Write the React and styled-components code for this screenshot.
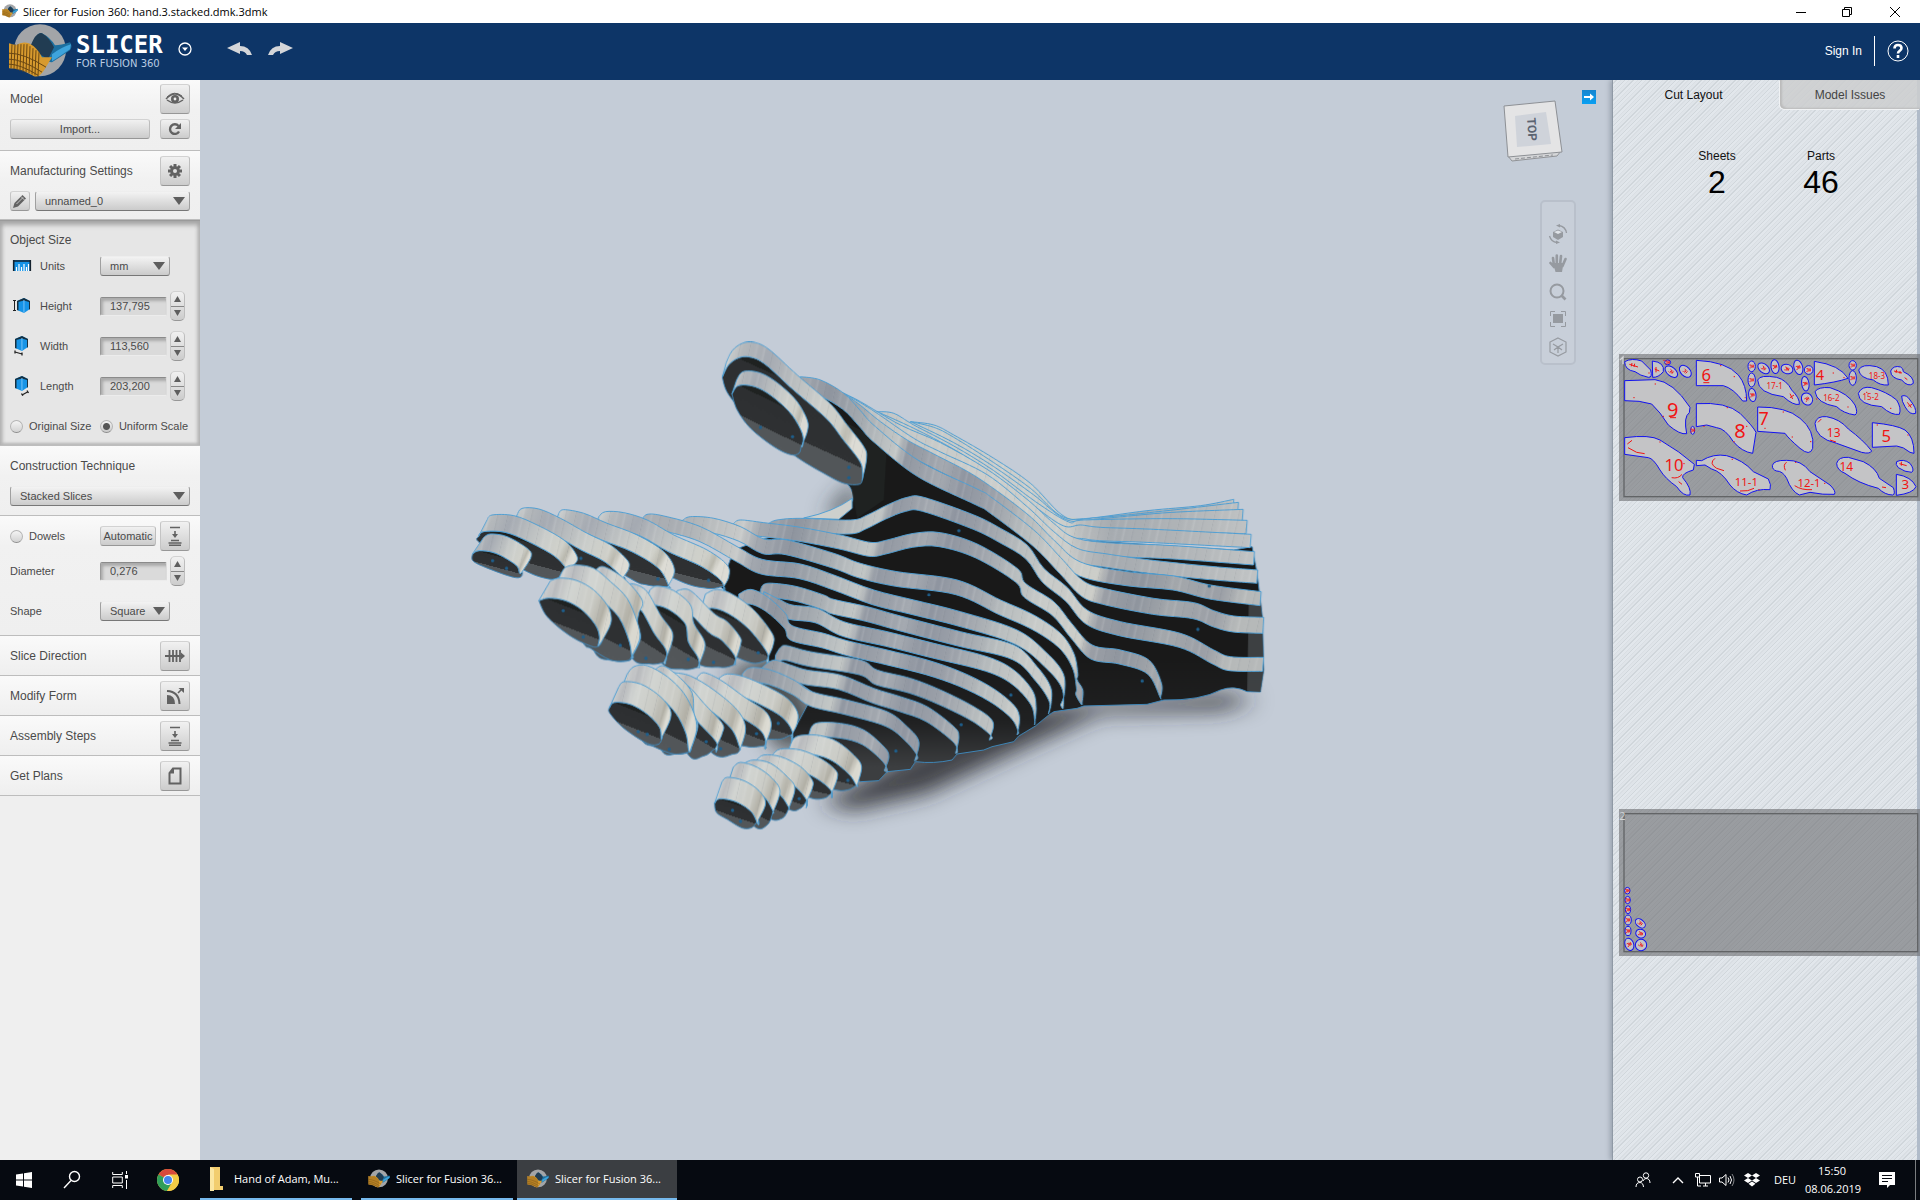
import React from "react";
import styled, { createGlobalStyle, css } from "styled-components";

const GlobalStyle = createGlobalStyle`
  * { box-sizing: border-box; }
  html, body, #root { height: 100%; }
  body { margin: 0; overflow: hidden; font-family: "Liberation Sans", Arial, sans-serif; font-size: 12px; color: #4a4a4a; }
  button, input, select { font: inherit; color: inherit; margin: 0; padding: 0; }
  svg { display: block; }
`;

/* ---------- window frame ---------- */

const Window = styled.div`
  display: flex;
  flex-direction: column;
  height: 100vh;
`;

const TitleBar = styled.div`
  display: flex;
  align-items: center;
  height: 23px;
  background: #fff;
  color: #000;
  font: 11px/16px "Open Sans", "Noto Sans", sans-serif;
  padding-left: 2px;
  gap: 5px;
`;

const WindowButtons = styled.div`
  display: flex;
  margin-left: auto;
`;

const WindowButton = styled.button`
  display: grid;
  place-items: center;
  width: 46px;
  height: 20px;
  border: 0;
  background: none;
  color: #000;
  &:last-child { width: 50px; }
`;

const Header = styled.header`
  display: flex;
  align-items: center;
  height: 57px;
  padding: 0 11px 0 8px;
  background: #0d3567;
  color: #fff;
`;

const Brand = styled.div`
  display: flex;
  align-items: center;
  gap: 4px;
`;

const BrandName = styled.div`
  font: bold 24px/24px "DejaVu Sans Mono", monospace;
`;

const BrandSub = styled.div`
  font: 10px/14px "DejaVu Sans", sans-serif;
  color: #b9cbe2;
`;

const IconButton = styled.button`
  display: grid;
  place-items: center;
  border: 0;
  background: none;
  color: inherit;
`;

const History = styled.div`
  display: flex;
  gap: 16px;
  margin-left: 35px;
  padding-bottom: 6px;
`;

const BrandMenu = styled(IconButton)`
  margin: 0 0 6px 15px;
`;

const Account = styled.div`
  display: flex;
  align-items: center;
  gap: 12px;
  margin-left: auto;
  padding-bottom: 2px;
`;

const SignIn = styled.a`
  color: #fff;
  text-decoration: none;
`;

const Divider = styled.span`
  width: 1px;
  height: 30px;
  background: #fff;
`;

const Main = styled.div`
  display: flex;
  flex: 1;
  min-height: 0;
`;

/* ---------- settings side bar ---------- */

const Sidebar = styled.aside`
  width: 200px;
  flex: none;
  background: #efefef;
`;

const raised = css`
  border: 1px solid;
  border-color: #d2d2d2 #bdbdbd #979797 #c4c4c4;
  border-radius: 3px;
  background: linear-gradient(#f1f1f1, #cccccc);
`;

const Section = styled.section`
  display: flex;
  flex-direction: column;
  gap: ${(p) => p.$gap || 5}px;
  padding: ${(p) => p.$pad || "5px 10px 8px"};
  background: linear-gradient(#fafafa, #f1f1f1 30px, #efefef);
  border-bottom: 1px solid #bdbdbd;
`;

const Sunken = styled(Section)`
  padding: 11px 10px;
  background: #e6e6e6;
  border-top: 1px solid #9a9a9a;
  box-shadow: inset 0 4px 5px #a5a5a5, inset 0 -2px 3px #bbb, inset 3px 0 3px #c6c6c6, inset -3px 0 3px #c6c6c6;
  gap: 8px;
`;

const Row = styled.div`
  display: flex;
  align-items: center;
  height: ${(p) => p.$h || 30}px;
  gap: ${(p) => p.$gap || 10}px;
`;

const Heading = styled.h2`
  margin: 0;
  font-size: 12px;
  font-weight: normal;
  line-height: 16px;
  flex: 1;
  white-space: nowrap;
`;

const Tool = styled.button`
  ${raised}
  display: grid;
  place-items: center;
  flex: none;
  width: ${(p) => p.$w || 30}px;
  height: ${(p) => p.$h || 30}px;
  color: #626262;
`;

const TextButton = styled.button`
  ${raised}
  flex: ${(p) => (p.$grow ? 1 : "none")};
  width: ${(p) => (p.$grow ? "auto" : "56px")};
  height: 20px;
  font-size: 11px;
  line-height: 16px;
`;

const SelectWrap = styled.span`
  display: flex;
  position: relative;
  width: ${(p) => p.$w || "100%"};
  flex: ${(p) => (p.$w ? "none" : 1)};
  &::after {
    content: "";
    position: absolute;
    right: 5px;
    top: 6px;
    border: 6px solid transparent;
    border-top: 8px solid #5e5e5e;
    border-bottom: 0;
    pointer-events: none;
  }
`;

const Select = styled.select`
  appearance: none;
  width: 100%;
  height: 20px;
  padding-left: 9px;
  font-size: 11px;
  border: 1px solid;
  border-color: #eee #a0a0a0 #777 #a0a0a0;
  border-radius: 3px;
  background: linear-gradient(#f3f3f3, #cbcbcb);
`;

const FieldRow = styled.div`
  display: grid;
  grid-template-columns: ${(p) => (p.$plain ? "90px 67px 15px" : "30px 60px 67px 15px")};
  align-items: center;
  height: ${(p) => p.$h || 30}px;
  font-size: 11px;
`;

const Measures = styled.div`
  display: flex;
  flex-direction: column;
  gap: 10px;
  margin-top: 7px;
`;

const NumberInput = styled.input`
  width: 67px;
  height: 19px;
  padding-left: 9px;
  font-size: 11px;
  border: 1px solid;
  border-color: #8b8b8b #dcdcdc #ececec #9a9a9a;
  border-radius: 2px;
  background: #dadada;
  box-shadow: inset 2px 3px 3px #aaa;
`;

const Stepper = styled.div`
  ${raised}
  width: 15px;
  height: 30px;
  margin-left: 3px;
  border-radius: 5px;
  display: flex;
  flex-direction: column;
`;

const StepButton = styled.button`
  display: grid;
  place-items: center;
  flex: 1;
  border: 0;
  background: none;
  color: #5e5e5e;
  & + & { border-top: 1px solid #888; }
`;

const Radios = styled.div`
  display: flex;
  justify-content: space-between;
  height: 16px;
  margin-top: 9px;
  padding-right: 2px;
`;

const RadioLabel = styled.label`
  display: flex;
  align-items: center;
  gap: 6px;
  font-size: 11px;
  flex: ${(p) => (p.$grow ? 1 : "none")};
`;

const Radio = styled.input`
  appearance: none;
  width: 13px;
  height: 13px;
  border: 1px solid #b4b4b4;
  border-bottom-color: #8d8d8d;
  border-radius: 50%;
  background: linear-gradient(#f4f4f4, #d2d2d2);
  &:checked {
    background: radial-gradient(circle, #555 0 3px, transparent 4px), linear-gradient(#f4f4f4, #c8c8c8);
  }
`;

/* ---------- viewport ---------- */

const Viewport = styled.main`
  position: relative;
  flex: 1;
  min-width: 0;
  background: #c4ccd7;
`;

const Scene = styled.svg`
  width: 100%;
  height: 100%;
`;

const Collapse = styled.button`
  position: absolute;
  top: 10px;
  right: 17px;
  width: 14px;
  height: 14px;
  padding: 0;
  border: 0;
  background: linear-gradient(#1585cf, #0aa0f2);
`;

const ViewCube = styled.button`
  position: absolute;
  top: 20px;
  right: 50px;
  border: 0;
  background: none;
`;

const NavBar = styled.nav`
  position: absolute;
  top: 120px;
  right: 37px;
  width: 36px;
  height: 165px;
  padding: 22px 0 6px;
  display: flex;
  flex-direction: column;
  align-items: center;
  justify-content: space-between;
  border: 2px solid #b9c0cb;
  border-radius: 5px;
  background: #c8cfd9;
  color: #969aa0;
`;

/* ---------- cut layout panel ---------- */

const stripes = css`
  background: repeating-linear-gradient(135deg, #dfe4e9 0 2px, #d0d6db 2px 3px, #e2e7ec 3px 5px, #d9dee3 5px 6px);
`;

const Panel = styled.aside`
  ${stripes}
  position: relative;
  flex: none;
  width: 307px;
  box-shadow: inset -3px 0 0 #b0bbc9, -1px 0 0 #8f99a5, -3px 0 5px #98a1ad;
  clip-path: inset(0 0 0 -10px);
`;

const Tabs = styled.div`
  display: flex;
  height: 29px;
`;

const Tab = styled.button`
  border: 0;
  background: none;
  color: ${(p) => (p.$active ? "#111" : "#444")};
  flex: ${(p) => (p.$active ? 1 : "none")};
  width: 140px;
  padding-right: ${(p) => (p.$active ? "6px" : 0)};
  ${(p) =>
    !p.$active &&
    css`
      background: rgba(205, 206, 207, 0.85);
      border-radius: 0 0 0 5px;
      box-shadow: inset 2px -1px 2px #bbb, -1px 1px 0 #f0f2f4;
    `}
`;

const Stats = styled.dl`
  display: flex;
  margin: 39px 0 0 52px;
  color: #111;
`;

const Stat = styled.div`
  width: 104px;
  text-align: center;
  dt { line-height: 16px; }
  dd { margin: 0; font-size: 32px; line-height: 36px; color: #000; }
`;

const Sheets = styled.div`
  display: flex;
  flex-direction: column;
  gap: 308px;
  padding: 154px 0 0 6px;
`;

/* ---------- task bar ---------- */

const Taskbar = styled.footer`
  display: flex;
  align-items: stretch;
  height: 40px;
  background: #060a11;
  color: #fff;
  font: 11px/16px "Open Sans", "Noto Sans", sans-serif;
`;

const TaskIcon = styled.button`
  display: grid;
  place-items: center;
  width: 48px;
  border: 0;
  background: none;
  color: #fff;
`;

const Launchers = styled.div`
  display: flex;
  width: 200px;
`;

const Task = styled.button`
  display: flex;
  align-items: center;
  gap: 6px;
  width: ${(p) => (p.$active ? 160 : 152)}px;
  margin-right: ${(p) => p.$mr || 0}px;
  padding-left: ${(p) => (p.$active ? 10 : 7)}px;
  border: 0;
  border-bottom: 2px solid #76b9ed;
  background: ${(p) => (p.$active ? "#3b3e42" : "none")};
  color: #fff;
  white-space: nowrap;
`;

const Tray = styled.div`
  display: flex;
  align-items: center;
  margin-left: auto;
`;

const TrayButton = styled.button`
  display: grid;
  place-items: center;
  width: ${(p) => p.$w || 24}px;
  border: 0;
  background: none;
  color: #fff;
`;

const Clock = styled.div`
  width: 54px;
  text-align: center;
  line-height: 18px;
  white-space: nowrap;
`;

const ShowDesktop = styled.div`
  width: 5px;
  height: 40px;
  border-left: 1px solid #7a7d80;
`;

/* ---------- drawings ---------- */

// Catmull-Rom spline through the points; continues the current path when join is set.
function spline(pts, join) {
  let d = (join ? "L" : "M") + pts[0][0] + " " + pts[0][1];
  for (let i = 0; i < pts.length - 1; i++) {
    const a = pts[i - 1] || pts[i];
    const b = pts[i];
    const c = pts[i + 1];
    const e = pts[i + 2] || c;
    const f = (n) => n.toFixed(1);
    d += ` C${f(b[0] + (c[0] - a[0]) / 6)} ${f(b[1] + (c[1] - a[1]) / 6)} ${f(c[0] - (e[0] - b[0]) / 6)} ${f(c[1] - (e[1] - b[1]) / 6)} ${c[0]} ${c[1]}`;
  }
  return d;
}

const toPoints = (s) => s.split(" ").map((p) => p.split(",").map(Number));

// One layer of the stack: its rim (top edge swept by v) and the dark face below it.
// A tapered rim runs out in a point at its right end.
function Slice({ top, v = [-4, 44], under, taper, fill = "url(#palm)", face = "url(#face)" }) {
  const edge = toPoints(top);
  const low = edge.map(([x, y]) => [x + v[0], y + v[1]]);
  const end = edge[edge.length - 1];
  const lowEdge = under || taper ? low.slice(0, -1).filter(([, y]) => y < end[1] + 10 || !taper).concat([end]) : low;
  const rim = spline(edge) + spline([...lowEdge].reverse(), true) + "Z";
  return (
    <g strokeLinejoin="round">
      {under && <path d={spline([...lowEdge, ...toPoints(under), lowEdge[0]]) + "Z"} fill={face} stroke="#3f87b8" strokeWidth="3" />}
      <path d={rim} fill={fill} stroke="#4f9fd3" strokeWidth="3" />
      <path d={rim} fill="url(#streak)" />
    </g>
  );
}

const wristSheets = [
  "630,-55 700,-45 760,-15 880,55 990,130 1085,225 1150,236 1340,212 1500,197 1600,178",
  "630,-55 700,-38 760,-8 880,68 990,145 1090,232 1200,232 1400,212 1614,187",
  "630,-55 760,8 880,80 1000,165 1100,240 1200,236 1400,218 1628,208",
  "530,-85 580,-80 640,-45 760,18 880,92 1005,185 1105,246 1150,240 1400,236 1640,241",
  "530,-85 640,-35 760,28 880,105 1010,205 1090,258 1140,255 1200,262 1360,268 1652,283",
  "430,-140 480,-115 600,-45 720,8 860,88 980,178 1060,250 1120,292 1220,308 1420,317 1662,335",
  "430,-140 480,-112 530,-80 640,-5 720,36 860,104 980,200 1060,275 1130,325 1220,342 1350,360 1520,378 1672,390",
];

const palmSlices = [
  { top: "205,250 230,240 300,235 450,240 500,225 560,195 620,172 670,172 820,225 900,265 980,315 1030,385 1100,442 1160,510 1260,545 1440,580 1540,630 1590,650 1690,652", v: [-4, 42] },
  { top: "100,250 120,240 190,248 300,262 420,285 510,307 560,300 640,280 720,278 830,312 950,385 975,430 1060,485 1115,552 1175,615 1260,630 1345,660 1383,730 1380,774", v: [-4, 42], taper: true },
  { top: "-55,242 -30,230 40,235 120,260 190,297 260,300 400,340 480,370 590,395 770,420 900,480 1000,525 1080,580 1120,640 1132,700 1130,720 1147,750 1145,788", taper: true },
  { top: "-175,240 -160,223 -110,228 0,260 110,320 185,358 300,372 400,405 520,450 640,480 780,515 950,570 1040,640 1088,700 1092,760 1080,795", taper: true },
];

const lowerPalm = [
  { top: "180,450 190,433 220,430 290,440 370,465 400,478 500,500 600,528 780,575 940,615 1010,680 1050,740 1052,790 1044,822", taper: true },
  { top: "190,455 240,480 275,495 350,505 430,545 560,575 700,610 860,650 940,690 995,750 1007,800 1002,855", taper: true },
  { top: "115,462 150,448 200,470 255,520 275,557 370,580 440,602 560,630 680,660 780,695 870,740 935,790 957,830 950,885", taper: true },
  { top: "225,645 240,622 260,617 330,635 480,660 530,690 630,715 720,750 820,800 877,845 866,900", taper: true },
  { top: "185,682 220,660 270,675 320,690 420,705 520,745 600,770 680,800 760,860 775,890 765,940", taper: true },
  { top: "125,702 150,683 210,690 280,720 335,755 440,780 560,815 620,860 655,905 642,963", taper: true },
  { top: "325,882 345,850 420,850 490,870 550,920 565,950 551,992", taper: true },
];

const indexSlices = [
  { top: "415,560 435,545 490,548 560,570 640,615 740,660 800,705 805,740 790,770", v: [-16, 50], under: "740,775 640,745" },
  { top: "295,550 310,539 370,550 440,580 530,615 610,665 642,720 622,770", v: [-16, 50], under: "560,765 500,740" },
  { top: "170,555 185,535 235,537 300,565 380,610 450,645 500,690 505,715 490,740", v: [-18, 50], under: "430,735 300,690" },
  { top: "80,570 95,555 160,557 230,585 310,630 348,675 345,700 310,725", v: [-26, 50], under: "290,745 255,745 190,720 60,640" },
  { top: "70,622 90,612 140,620 200,655 212,680 185,725", v: [-34, 50], under: "182,740 160,742 100,722 40,695" },
];

const middleSlices = [
  { top: "735,72 770,58 820,75 880,120 935,190 938,225 918,272", v: [-16, 56], under: "870,278 780,230" },
  { top: "650,62 690,62 760,130 800,155 838,200 840,225 820,285", v: [-16, 56], under: "780,292 700,270" },
  { top: "568,60 590,48 640,62 690,105 700,160 728,205 733,235 712,292", v: [-16, 56], under: "670,298 600,275" },
  { top: "490,45 520,42 560,65 600,135 635,185 632,225 610,278", v: [-18, 56], under: "570,282 512,260" },
  { top: "405,0 430,-10 490,25 545,90 535,130 530,165 540,205 514,262", v: [-22, 56], under: "505,272 460,272 400,240" },
  { top: "300,15 315,-8 350,-15 400,-5 450,35 500,85 530,155 538,205 512,262", v: [-24, 58], under: "500,272 450,270 390,235 365,215" },
  { top: "270,32 300,24 350,32 400,60 440,105 452,140 448,168 425,212", v: [-35, 60], under: "415,228 390,228 325,195 260,140" },
];

const ringSlices = [
  { top: "775,325 800,312 850,320 920,350 980,385 1010,425 1010,460 993,495", v: [-16, 56], under: "950,508 860,490" },
  { top: "710,322 730,308 780,330 850,380 910,420 930,450 930,480 912,528", v: [-16, 56], under: "860,530 780,500" },
  { top: "640,308 690,318 760,360 830,420 855,475 838,540", v: [-18, 56], under: "820,552 750,545" },
  { top: "620,310 680,345 730,400 785,460 785,490 765,535", v: [-18, 56], under: "730,558 680,550" },
  { top: "585,298 610,288 660,325 695,370 700,430 712,470 688,545", v: [-22, 58], under: "650,552 600,535" },
  { top: "500,312 520,290 560,287 620,320 670,370 700,430 708,480 688,545", v: [-24, 60], under: "640,552 580,530 540,505" },
  { top: "474,352 490,335 540,342 590,372 625,410 630,445 605,500", v: [-28, 62], under: "595,522 560,520 490,475 448,430" },
];

const pinkySlices = [
  { top: "985,538 1000,505 1030,495 1080,497 1130,515 1180,555 1203,590 1190,645", v: [-14, 58], under: "1160,660 1110,655" },
  { top: "935,555 960,537 1020,540 1080,565 1125,600 1130,625 1113,670", v: [-16, 58], under: "1090,685 1040,680" },
  { top: "888,570 910,555 960,560 1020,590 1055,630 1055,655 1040,690", v: [-18, 58], under: "1020,715 980,715" },
  { top: "850,580 880,570 930,580 980,620 1003,655 985,715", v: [-18, 58], under: "965,745 920,740" },
  { top: "818,592 840,577 890,592 935,625 958,665 936,730", v: [-20, 60], under: "920,765 880,768" },
  { top: "784,636 800,622 850,632 895,662 915,700 893,750", v: [-22, 64], under: "875,772 845,774 800,748 768,728" },
];

const thumbSlices = [
  { top: "797,98 815,62 845,40 880,37 925,58 1010,135 1110,222 1160,285 1210,350 1218,385 1205,450", v: [-12, 44], under: "1195,463 1150,460 1090,430 1000,375 880,280 805,195" },
  { top: "828,150 845,126 880,124 920,138 965,170 1010,215 1040,270 1040,305 1022,350", v: [-14, 42], under: "1015,370 990,374 940,350 870,295 830,240" },
];

const pinHoles = "900,292 996,320 1165,412 1165,443 96,692 138,715 361,685 592,747 744,751 308,842 368,921 479,946 556,985 683,988 759,997 893,968 533,1205 560,1213 626,1258 737,1235 780,1256 888,1211 953,1180 816,1441 840,1474 1016,1406 1162,1351 1495,602 1405,795 1651,1095 1502,1184 1306,1263 2212,898 2045,1053 2246,768";

function HandModel() {
  return (
    <Scene viewBox="200 80 1412 1080" role="img" aria-label="Sliced hand model">
      <defs>
        <linearGradient id="palm" gradientUnits="userSpaceOnUse" x1="0" y1="0" x2="1640" y2="420">
          {[
            [0, "#aaaeb3"], [4, "#b5b9bb"], [11, "#c9cbca"], [14, "#a4a9b0"], [20, "#8f959f"], [26, "#a2a8ae"],
            [32, "#bcc1c2"], [34, "#c3c7c6"], [36, "#9298a2"], [43, "#a4a9b0"], [47, "#8f95a0"], [53, "#9da2aa"],
            [60, "#b9bebf"], [66, "#c8cbc9"], [74, "#cdcec9"], [76, "#9b9fa6"], [82, "#8f959e"], [88, "#a3a7ab"], [96, "#9b9fa6"], [100, "#b6b9b9"],
          ].map(([o, c]) => <stop key={o} offset={o + "%"} stopColor={c} />)}
        </linearGradient>
        <linearGradient id="back" gradientUnits="userSpaceOnUse" x1="300" y1="0" x2="1640" y2="0">
          {[[0, "#a6abb2"], [10, "#b9bdbf"], [22, "#c6c9c8"], [45, "#cdcfcc"], [60, "#cccecb"], [63, "#b9bcbd"], [70, "#a6abb0"], [85, "#b0b4b7"], [100, "#bfc2c3"]].map(([o, c]) => (
            <stop key={o} offset={o + "%"} stopColor={c} />
          ))}
        </linearGradient>
        <linearGradient id="finger" x1="0" y1="0.1" x2="1" y2="0.4">
          <stop offset="0" stopColor="#d6d8d6" />
          <stop offset="0.12" stopColor="#b4b8bb" />
          <stop offset="0.3" stopColor="#a5aab2" />
          <stop offset="0.5" stopColor="#b9bdbf" />
          <stop offset="0.7" stopColor="#cbcecb" />
          <stop offset="0.88" stopColor="#d0d1ca" />
          <stop offset="0.95" stopColor="#b9b8ae" />
          <stop offset="1" stopColor="#dddcd5" />
        </linearGradient>
        <linearGradient id="tip" x1="0" y1="0.1" x2="1" y2="0.4">
          <stop offset="0" stopColor="#dfe1df" />
          <stop offset="0.22" stopColor="#b9bbbe" />
          <stop offset="0.42" stopColor="#d2d5d2" />
          <stop offset="0.75" stopColor="#cacbc5" />
          <stop offset="0.92" stopColor="#b2b0a6" />
          <stop offset="1" stopColor="#dad9d0" />
        </linearGradient>
        <linearGradient id="streak" gradientUnits="userSpaceOnUse" x1="0" y1="0" x2="97" y2="22" spreadMethod="repeat">
          {[[0, 0], [8, 0.12], [12, 0], [30, 0.02], [33, 0.1], [37, 0], [60, 0], [63, 0.15], [65, 0], [84, 0.08], [90, 0], [100, 0]].map(([o, a]) => (
            <stop key={o} offset={o + "%"} stopColor={o % 2 ? "#5d6470" : "#fff"} stopOpacity={a} />
          ))}
        </linearGradient>
        <linearGradient id="face" x1="0.85" y1="0.1" x2="0.4" y2="1">
          <stop offset="0" stopColor="#1f2221" />
          <stop offset="0.25" stopColor="#1f2221" />
          <stop offset="0.25" stopColor="#2d2f31" />
          <stop offset="0.62" stopColor="#2f3133" />
          <stop offset="0.62" stopColor="#525659" />
          <stop offset="1" stopColor="#54585b" />
        </linearGradient>
        <linearGradient id="body" gradientUnits="userSpaceOnUse" x1="0" y1="650" x2="0" y2="980">
          <stop offset="0" stopColor="#191919" />
          <stop offset="0.6" stopColor="#202122" />
          <stop offset="1" stopColor="#3c3e40" />
        </linearGradient>
        <filter id="soft" x="-50%" y="-50%" width="200%" height="200%"><feGaussianBlur stdDeviation="32" /></filter>
      </defs>
      <g transform="translate(460 330) scale(0.33333)">
        <g filter="url(#soft)">
          <path d="M1080 1420 L1560 1160 L1900 1120 L2300 1090 L2390 1110 L2280 1140 L1920 1150 L1700 1250 L1400 1390 L1180 1440Z" fill="#2a2c30" opacity="0.85" />
          <path d="M1090 560 L1190 440 L1180 560Z" fill="#3a3d42" opacity="0.8" />
          <path d="M800 1020 L980 960 L1100 1230 L960 1270Z" fill="#2f3236" opacity="0.8" />
        </g>
        <g transform="translate(720 330)">
          <path
            d="M440 130 Q470 165 452 190 L415 232 L180 300 L100 330 L60 440 L150 520 L215 600 L200 660 L340 760 L270 890 L480 1025 L535 1022 L560 995 L630 988 L645 965 Q700 972 755 960 L770 942 L850 930 L875 920 L940 905 L955 888 L1005 858 L1045 825 L1060 815 L1130 805 L1150 798 L1340 793 L1390 780 Q1500 782 1560 750 Q1600 735 1640 755 L1680 756 L1690 690 L1686 532 L1670 400 L1655 320 L1600 330 L1130 300 L600 -20 L480 -90 L300 -150Z"
            fill="url(#body)" stroke="#3f87b8" strokeWidth="3"
          />
          <path d="M300 -120 L560 10 L550 180 L470 235 L450 130 L490 60Z" fill="#1f2221" />
          <path d="M1645 480 L1682 480 L1690 690 L1680 756 L1640 752Z" fill="#4a4d50" opacity="0.75" />
          <path d="M310 234 Q400 215 455 175 L455 205 L415 238Z" fill="#cdd0cd" stroke="#4f9fd3" strokeWidth="3" />
          <path
            d="M300 -190 L360 -180 L430 -140 L530 -85 L630 -55 L760 -10 L880 60 L990 135 L1085 228 L1150 236 L1150 395 L1130 390 L1000 258 L830 125 L655 40 L480 -60Z"
            fill="#cbcecb"
          />
          {wristSheets.map((top) => <Slice key={top} top={top} v={[-3, 40]} fill="url(#back)" />)}
          <Slice top="430,-140 480,-104 540,-55 620,0 700,42 830,112 980,222 1060,300 1140,366 1280,395 1420,408 1530,435 1682,455" v={[-3, 42]} />
          <Slice top="300,-190 360,-180 430,-140 480,-88 525,-40 655,62 830,147 870,170 1000,270 1080,352 1145,420 1210,445 1360,475 1480,488 1540,512 1600,528 1690,532" v={[-3, 48]} />
          {palmSlices.map((s) => <Slice key={s.top} {...s} />)}
        </g>
        {indexSlices.map((s) => <Slice key={s.top} {...s} fill="url(#finger)" />)}
        <g transform="translate(720 330)">
          {lowerPalm.slice(0, 3).map((s) => <Slice key={s.top} {...s} />)}
        </g>
        <g transform="translate(0 720)">
          {middleSlices.map((s) => <Slice key={s.top} {...s} fill="url(#tip)" />)}
        </g>
        <g transform="translate(720 330)">
          {lowerPalm.slice(3, 6).map((s) => <Slice key={s.top} {...s} />)}
        </g>
        <g transform="translate(0 720)">
          {ringSlices.map((s) => <Slice key={s.top} {...s} fill="url(#tip)" />)}
        </g>
        <g transform="translate(720 330)">
          <Slice {...lowerPalm[6]} />
        </g>
        <g transform="translate(0 720)">
          {pinkySlices.map((s) => <Slice key={s.top} {...s} fill="url(#tip)" />)}
        </g>
        {thumbSlices.map((s) => <Slice key={s.top} {...s} fill="url(#finger)" />)}
        {toPoints(pinHoles).map(([x, y]) => <circle key={x + "-" + y} cx={x} cy={y} r="5" fill="#1f5f8c" />)}
      </g>
    </Scene>
  );
}

function LogoMark({ size = 18 }) {
  const ribs = [0, 1, 2, 3, 4, 5, 6, 7, 8, 9];
  return (
    <svg width={size} height={size * 0.88} viewBox="0 0 64 56" aria-hidden="true">
      <circle cx="32" cy="27" r="26" fill="#a3a5a8" />
      <path d="M20 30 Q28 8 34 10 Q42 14 47 22 Q53 22 62 19 Q65 23 62 27 Q52 34 44 39 L34 38Z" fill="#1d6f9f" />
      <path d="M22 24 Q28 8 34 10 Q41 14 46 24 L40 36 L30 30Z" fill="#213c52" />
      <path d="M44 31 Q53 24 63 21 L62 26 Q52 33 44 38Z" fill="#3ea4dc" />
      <path d="M1 20 L8 22 Q14 18 21 20 Q29 24 34 34 L44 34 L36 47 Q31 55 26 53 Q14 45 1 45Z" fill="#d79a2e" />
      <g stroke="#6a4712" strokeWidth="1" fill="none">
        {ribs.map((i) => <path key={i} d={`M${4 + i * 3} ${21 + (i > 5 ? (i - 5) * 2 : 0)} L${3 + i * 3} ${45 + i * 0.9}`} />)}
        <path d="M1 30 Q16 30 38 44 M1 36 Q14 36 34 49 M1 41 Q12 41 30 52" />
      </g>
    </svg>
  );
}

const Svg = ({ w = 18, h, box, children }) => (
  <svg width={w} height={h || w} viewBox={box || `0 0 ${w} ${h || w}`} fill="none" stroke="currentColor" aria-hidden="true">
    {children}
  </svg>
);

const EyeIcon = () => (
  <Svg w={20} h={14}>
    <path d="M1 7 Q10 -3 19 7 M2 8 Q10 14 18 8" strokeWidth="1.4" />
    <path d="M2 5 Q9 -2 17 4" strokeWidth="1" />
    <circle cx="10" cy="7" r="4" fill="currentColor" stroke="none" />
    <circle cx="10" cy="7" r="1.4" fill="#eee" stroke="none" />
  </Svg>
);
const ReloadIcon = () => (
  <Svg w={14} h={14}>
    <path d="M11 9.5 A4.8 4.8 0 1 1 10.5 4" strokeWidth="2.4" />
    <path d="M13 1 V7 H7Z" fill="currentColor" stroke="none" />
  </Svg>
);
const GearIcon = () => (
  <Svg w={16}>
    {[0, 45, 90, 135].map((a) => <path key={a} d="M8 1 V15" strokeWidth="3" transform={`rotate(${a} 8 8)`} />)}
    <circle cx="8" cy="8" r="4.8" fill="currentColor" stroke="none" />
    <circle cx="8" cy="8" r="2" fill="#e0e0e0" stroke="none" />
  </Svg>
);
const PencilIcon = () => (
  <Svg w={14}>
    <path d="M0 14 L1.5 9 L9.5 1 L13 4.5 L5 12.5Z" fill="currentColor" stroke="none" />
    <path d="M3.5 10 L10 3.5 M8 2.5 L11.5 6" stroke="#ddd" strokeWidth="0.8" />
  </Svg>
);
const StackIcon = () => (
  <Svg w={16} h={20}>
    <path d="M3 1.5 H13 M4 14.5 H12 M1.5 17 H14.5 M2 19.2 H14" strokeWidth="1.6" />
    <path d="M8 5 V9" strokeWidth="1.6" />
    <path d="M5 8 H11 L8 12Z" fill="currentColor" stroke="none" />
  </Svg>
);
const DirectionIcon = () => (
  <Svg w={20} h={12}>
    <path d="M0 6 H16 M4.5 0 V12 M8 0 V12 M11.5 0 V12 M15 0 V12" strokeWidth="1.8" />
    <path d="M16 2.5 L20 6 L16 9.5Z" fill="currentColor" stroke="none" />
  </Svg>
);
const FormIcon = () => (
  <Svg w={18} h={18}>
    <path d="M1 8 Q9 8 9 17 H1Z" fill="currentColor" stroke="none" />
    <path d="M1 4 Q13 4.5 13.5 17" strokeWidth="2" />
    <path d="M12 6 L15 3" strokeWidth="1.6" />
    <path d="M12.5 1 H18 V6Z" fill="currentColor" stroke="none" />
  </Svg>
);
const PlansIcon = () => (
  <Svg w={14} h={18}>
    <path d="M5 1.5 H12.5 V16.5 H1.5 V6Z" strokeWidth="2" />
    <path d="M1 6.5 H6 V1Z" fill="currentColor" stroke="none" />
  </Svg>
);

const RulerIcon = () => (
  <Svg w={24} h={12}>
    <g transform="translate(3 0)">
      <rect width="18" height="11" fill="#1593e6" stroke="none" />
      <path d="M0 1 H18 M.7 0 V11 M17.3 0 V11" stroke="#14222e" strokeWidth="1.6" />
      <path d="M3.5 7 V11 M6 4 V11 M8.5 7 V11 M11 4 V11 M13.5 7 V11 M15.5 4 V11" stroke="#fff" strokeWidth="1.2" />
    </g>
  </Svg>
);
const AxisIcon = ({ axis }) => (
  <Svg w={22} h={20}>
    <g transform={axis === "height" ? "translate(4 1)" : "translate(2 -1)"} stroke="none">
      <path d="M3 4 L10 1 L16 4 V12 L10 16 L3 13Z" fill="#1593e6" />
      <path d="M3 4 L10 1 L16 4 L15 5 L10 3.5 L4 5Z M3 4 H4.5 V13.5 L3 13Z M15 4 H16 V12 L15 12.7Z" fill="#17303f" />
      <path d="M9.6 3 V15.5 H10.3 V3Z" fill="#9ed6ff" />
    </g>
    {axis === "height" && <path d="M3 4.5 H6 M3 14.5 H6 M4.5 4.5 V14.5" stroke="#222" />}
    {axis === "width" && <path d="M5 16 L12 18 M5 14.5 V17.5 M12 16.5 V19.5" stroke="#222" strokeWidth="1.3" />}
    {axis === "length" && <path d="M12 19 L17.5 16 M11.5 17.5 L13 20 M17 14.5 L18.5 17" stroke="#222" strokeWidth="1.3" />}
  </Svg>
);

const Spin = ({ label }) => (
  <Stepper>
    <StepButton aria-label={`Increase ${label}`}><Svg w={7} h={6}><path d="M3.5 0 L7 6 H0Z" fill="currentColor" stroke="none" /></Svg></StepButton>
    <StepButton aria-label={`Decrease ${label}`}><Svg w={7} h={6}><path d="M3.5 6 L7 0 H0Z" fill="currentColor" stroke="none" /></Svg></StepButton>
  </Stepper>
);

const Measure = ({ id, label, value }) => (
  <FieldRow>
    <AxisIcon axis={id} />
    <label htmlFor={id}>{label}</label>
    <NumberInput id={id} defaultValue={value} />
    <Spin label={id} />
  </FieldRow>
);

const Picker = ({ id, w, value, label }) => (
  <SelectWrap $w={w}>
    <Select id={id} aria-label={label} defaultValue={value}>
      <option>{value}</option>
    </Select>
  </SelectWrap>
);

function Settings() {
  return (
    <Sidebar>
      <Section $pad="4px 10px 11px">
        <Row><Heading>Model</Heading><Tool aria-label="Show model"><EyeIcon /></Tool></Row>
        <Row $h={20}><TextButton $grow>Import...</TextButton><Tool $h={20} aria-label="Reload"><ReloadIcon /></Tool></Row>
      </Section>
      <Section>
        <Row><Heading>Manufacturing Settings</Heading><Tool aria-label="Edit settings"><GearIcon /></Tool></Row>
        <Row $h={20} $gap={5}>
          <Tool $w={20} $h={20} aria-label="Rename"><PencilIcon /></Tool>
          <Picker id="preset" value="unnamed_0" label="Preset" />
        </Row>
      </Section>
      <Sunken>
        <Heading>Object Size</Heading>
        <FieldRow $h={20}>
          <RulerIcon />
          <label htmlFor="units">Units</label>
          <Picker id="units" w="70px" value="mm" />
        </FieldRow>
        <Measures>
          <Measure id="height" label="Height" value="137,795" />
          <Measure id="width" label="Width" value="113,560" />
          <Measure id="length" label="Length" value="203,200" />
        </Measures>
        <Radios>
          <RadioLabel><Radio type="radio" name="scale" />Original Size</RadioLabel>
          <RadioLabel><Radio type="radio" name="scale" defaultChecked />Uniform Scale</RadioLabel>
        </Radios>
      </Sunken>
      <Section $pad="12px 10px 9px" $gap={12}>
        <Heading>Construction Technique</Heading>
        <Row $h={20}><Picker id="technique" value="Stacked Slices" label="Construction Technique" /></Row>
      </Section>
      <Section $pad="5px 10px 4px" $gap={5}>
        <Row $gap={4}>
          <RadioLabel $grow><Radio type="radio" name="dowels" />Dowels</RadioLabel>
          <TextButton>Automatic</TextButton>
          <Tool aria-label="Dowel assembly"><StackIcon /></Tool>
        </Row>
        <FieldRow $plain>
          <label htmlFor="diameter">Diameter</label>
          <NumberInput id="diameter" defaultValue="0,276" />
          <Spin label="diameter" />
        </FieldRow>
        <FieldRow $plain $h={40}>
          <label htmlFor="shape">Shape</label>
          <Picker id="shape" w="70px" value="Square" />
        </FieldRow>
      </Section>
      {[
        ["Slice Direction", DirectionIcon],
        ["Modify Form", FormIcon],
        ["Assembly Steps", StackIcon],
        ["Get Plans", PlansIcon],
      ].map(([name, Icon]) => (
        <Section key={name} $pad="5px 10px 4px">
          <Row><Heading>{name}</Heading><Tool aria-label={name}><Icon /></Tool></Row>
        </Section>
      ))}
    </Sidebar>
  );
}

/* parts nested on the first sheet: outlines, large labels and small marks */
const outlines = [
  "M44 107 L135 104 Q190 110 240 187 L238 203 Q220 215 230 266 Q210 270 175 240 Q150 200 125 177 Q90 166 44 167Z",
  "M259 46 Q350 50 385 90 Q410 120 410 168 L398 168 Q370 130 340 122 L259 122Z",
  "M259 176 Q350 170 390 205 Q430 245 438 262 L428 325 Q395 320 370 290 Q345 250 320 248 L290 240 L259 245Z",
  "M443 186 Q530 185 570 220 Q615 255 608 310 Q600 335 570 310 Q535 280 525 265 L443 259Z",
  "M44 278 Q120 268 150 285 Q210 320 253 358 L250 375 Q215 385 218 398 Q245 430 240 450 Q220 455 200 425 Q165 400 150 375 Q130 340 115 338 L44 328Z",
  "M259 346 L275 347 Q310 325 350 332 Q400 345 430 380 L475 402 Q485 420 480 434 Q440 430 410 450 Q380 445 360 420 Q335 380 305 372 L285 360 L259 362Z",
  "M487 362 Q490 345 530 346 Q575 345 600 380 L660 420 Q680 440 673 448 Q640 450 600 442 L568 450 Q545 440 530 400 Q518 378 500 378Q487 375 487 362Z",
  "M680 355 Q685 335 715 337 L760 350 Q800 370 808 400 L850 428 Q857 448 848 450 Q825 450 805 430 Q745 415 705 385 Q680 375 680 355Z",
  "M615 235 Q620 212 650 215 Q690 222 715 252 Q760 285 785 318 Q780 328 755 322 L680 295 Q615 280 615 235Z",
  "M787 233 Q860 240 885 255 Q912 275 912 325 L900 322 Q880 305 860 303 L787 307Z",
  "M613 49 Q690 60 714 100 Q680 112 613 120Z",
  "M615 140 Q625 125 660 128 Q715 145 735 180 Q745 205 735 210 Q700 205 680 185 Q620 175 615 140Z",
  "M745 145 Q755 122 785 128 Q830 140 860 165 Q875 190 868 208 Q845 212 815 185 Q745 180 745 145Z",
  "M443 105 Q450 88 500 97 Q530 105 545 135 Q570 160 568 178 Q550 182 520 155 Q443 145 443 105Z",
  "M746 75 Q755 55 800 65 Q835 75 835 120 Q810 122 790 105 Q750 100 746 75Z",
  "M842 78 Q850 60 872 66 Q880 70 880 80 Q912 95 910 115 Q895 128 875 105 Q842 100 842 78Z",
  "M44 50 Q65 38 95 48 L122 75 Q128 98 115 97 Q90 92 75 80 Q44 75 44 50Z",
  "M127 48 Q165 52 160 80 Q145 98 128 97Z",
  "M859 388 Q905 395 918 425 Q910 445 859 451Z",
  "M875 153 Q890 148 900 165 Q920 190 917 205 Q900 212 885 185 Q875 170 875 153Z",
  "M860 350 Q880 340 900 355 Q915 375 905 382 Q885 382 865 368 Q855 358 860 350Z",
];
const ovals = [
  [173, 52, 9, 7, 0], [184, 80, 22, 13, 40], [226, 79, 21, 14, 45], [425, 64, 11, 16, 0], [461, 70, 20, 13, 40], [495, 65, 12, 21, -8],
  [531, 72, 18, 14, 20], [565, 67, 13, 22, -15], [596, 75, 13, 13, 0], [425, 105, 11, 21, 0], [427, 150, 11, 20, -8], [586, 116, 11, 22, -8],
  [591, 162, 16, 19, -30], [728, 61, 11, 14, 0], [728, 99, 11, 22, 0], [248, 256, 6, 12, 0],
];
const labels = [
  ["9", 188, 216, 60], ["6", 289, 108, 50], ["8", 390, 278, 60], ["7", 461, 241, 54], ["10", 192, 378, 50], ["11-1", 409, 422, 34], ["12-1", 597, 426, 34],
  ["14", 709, 377, 36], ["13", 671, 275, 36], ["5", 829, 290, 50], ["4", 630, 104, 44], ["16-2", 664, 168, 24], ["15-2", 782, 165, 24], ["17-1", 494, 131, 24], ["18-3", 801, 102, 24], ["3", 886, 433, 40],
];

function PartOvals({ items }) {
  return items.map(([x, y, rx, ry, a]) => (
    <g key={x + "-" + y} transform={`translate(${x} ${y}) rotate(${a})`}>
      <ellipse rx={rx} ry={ry} fill="#c4c4c6" stroke="#1212f0" strokeWidth="3" />
      <path d="M-7 -4 H-2 V4 M1 -5 V5 M1 0 H6 M-7 5 H-3 M5 -5 V4" stroke="#f01414" strokeWidth="2.4" fill="none" />
    </g>
  ));
}

function Sheet({ number, children }) {
  return (
    <svg width="100%" viewBox="27 27 903 441" role="img" aria-label={`Sheet ${number}`}>
      <rect x="27" y="27" width="903" height="441" fill="#6e7072" opacity="0.62" />
      <rect x="42" y="41" width="881" height="414" fill="none" stroke="#626466" strokeWidth="4" />
      {children}
    </svg>
  );
}

function CutPanel() {
  return (
    <Panel>
      <Tabs role="tablist">
        <Tab role="tab" aria-selected="true" $active>Cut Layout</Tab>
        <Tab role="tab" aria-selected="false">Model Issues</Tab>
      </Tabs>
      <Stats>
        <Stat><dt>Sheets</dt><dd>2</dd></Stat>
        <Stat><dt>Parts</dt><dd>46</dd></Stat>
      </Stats>
      <Sheets>
        <Sheet number={1}>
          <path d="M30 45 L39 36 V58" stroke="#d6d8da" strokeWidth="4" fill="none" />
          <g fill="#c4c4c6" stroke="#1212f0" strokeWidth="3">{outlines.map((d) => <path key={d} d={d} />)}</g>
          <PartOvals items={ovals} />
          <g fill="#f01414" fontFamily="Noto Sans, sans-serif" textAnchor="middle">
            {labels.map(([t, x, y, s]) => <text key={t} x={x} y={y} fontSize={s}>{t}</text>)}
          </g>
          <g stroke="#f01414" strokeWidth="3" fill="none">
            <path d="M315 340 Q295 355 320 370 L342 377 M66 286 L52 297 M54 308 L80 322 L104 326 M185 398 Q205 402 216 388 M390 438 Q415 440 432 430 M554 422 Q575 436 606 434 M530 352 Q518 358 526 376 M660 285 L678 291 M624 232 L634 222 M280 113 H298 M180 218 H198" />
            <path d="M58 58 L84 66 M66 54 L64 64 M74 56 L72 66 M852 78 L876 84 M860 74 L858 84 M870 78 V86 M884 98 L892 104 M134 72 L148 78 M138 66 V82 M540 146 L548 162 M540 158 L552 150 M868 356 L890 362 M874 350 V362 M892 172 L904 188 M895 184 L906 178 M206 410 L216 418 M816 426 L828 428" />
            <path d="M115 84 h4 M160 46 h4 M330 62 h4 M371 95 h4 M404 158 h3 M70 158 h4 M134 117 h4 M158 214 h4 M350 188 h4 M280 244 h4 M370 290 h4 M408 244 h4 M463 250 h4 M518 201 h4 M545 276 h4 M600 290 h4 M148 291 h4 M220 356 h4 M365 343 h4 M445 434 h4 M555 352 h4 M642 415 h4 M618 162 h4 M712 186 h4 M768 142 h4 M840 190 h4 M800 240 h4 M892 270 h4 M668 84 h4 M700 98 h4" />
          </g>
        </Sheet>
        <Sheet number={2}>
          <text x="28" y="61" fontSize="32" fill="#d2d4d6" fontFamily="Noto Sans, sans-serif">2</text>
          <PartOvals items={[[52, 272, 8, 10, 0], [53, 300, 8, 11, 0], [54, 329, 8, 12, 0], [54, 360, 10, 15, 0], [54, 393, 9, 14, 0], [58, 433, 13, 19, -20], [91, 370, 17, 11, 40], [92, 401, 15, 13, 20], [93, 435, 17, 17, 40]]} />
        </Sheet>
      </Sheets>
    </Panel>
  );
}

const RedoShape = () => (
  <path d="M25 6 L12 0 V4 Q3 4 0 13 H5 Q7 9 12 9 V12Z" fill="#d4d6d9" stroke="none" />
);

export default function App() {
  return (
    <Window>
      <GlobalStyle />
      <TitleBar>
        <LogoMark size={16} />
        <span>Slicer for Fusion 360: hand.3.stacked.dmk.3dmk</span>
        <WindowButtons>
          <WindowButton aria-label="Minimize"><Svg w={10}><path d="M0 5.5 H10" /></Svg></WindowButton>
          <WindowButton aria-label="Restore"><Svg w={10}><path d="M.5 2.5 H7.5 V9.5 H.5Z M2.5 2.5 V.5 H9.5 V7.5 H7.5" /></Svg></WindowButton>
          <WindowButton aria-label="Close"><Svg w={10}><path d="M0 0 L10 10 M10 0 L0 10" /></Svg></WindowButton>
        </WindowButtons>
      </TitleBar>
      <Header>
        <Brand>
          <LogoMark size={64} />
          <div>
            <BrandName>SLICER</BrandName>
            <BrandSub>FOR FUSION 360</BrandSub>
          </div>
        </Brand>
        <BrandMenu aria-label="Application menu">
          <Svg w={14}><circle cx="7" cy="7" r="6" strokeWidth="1.3" /><path d="M4 5.5 H10 L7 9Z" fill="currentColor" stroke="none" /></Svg>
        </BrandMenu>
        <History>
          <IconButton aria-label="Undo"><Svg w={25} h={14}><g transform="translate(25 0) scale(-1 1)"><RedoShape /></g></Svg></IconButton>
          <IconButton aria-label="Redo"><Svg w={25} h={14}><RedoShape /></Svg></IconButton>
        </History>
        <Account>
          <SignIn href="#signin">Sign In</SignIn>
          <Divider />
          <IconButton aria-label="Help">
            <Svg w={22}>
              <circle cx="11" cy="11" r="10" />
              <path d="M7.5 8.5 Q7.5 5 11 5 Q14.5 5 14.5 8 Q14.5 10 12.5 11 Q11 12 11 13.5 M11 15 V18" strokeWidth="2.6" />
            </Svg>
          </IconButton>
        </Account>
      </Header>
      <Main>
        <Settings />
        <Viewport>
          <HandModel />
          <Collapse aria-label="Collapse panel"><Svg w={14}><path d="M2 7 H9" stroke="#fff" strokeWidth="2" /><path d="M8 3.5 L12 7 L8 10.5Z" fill="#fff" stroke="none" /></Svg></Collapse>
          <ViewCube aria-label="View cube">
            <svg width="60" height="63" viewBox="0 0 60 63">
              <path d="M5 56 L58 51 L54 56 L9 61Z" fill="#d5d6d8" stroke="#909296" />
              <path d="M1 6 L52 1 L59 52 L5 57Z" fill="#e4e4e5" stroke="#8d9095" />
              <path d="M12 16 L43 12 L48 44 L14 47Z" fill="#cfd3da" />
              <path d="M12 59 L50 55" stroke="#8d9095" strokeDasharray="4 2" />
              <text transform="translate(24 18) rotate(86)" fontFamily="Roboto, sans-serif" fontWeight="700" fontSize="12" fill="#5b6370">TOP</text>
            </svg>
          </ViewCube>
          <NavBar aria-label="Navigation">
            <Svg w={20}>
              <path d="M5 8 L10 5.5 L15 8 V13 L10 16 L5 13Z" fill="currentColor" stroke="none" />
              <path d="M6 8 L10 6.5 L14 8 L10 10Z" fill="#dfe3e8" stroke="none" />
              <path d="M1.500 12 A9 9 0 0 0 9 18.5 M18.5 9 A9 9 0 0 0 11 1.5" strokeWidth="1.3" />
              <path d="M8 16.5 L12 18.5 L8 20Z M12 0 L8 1.5 L12 3.5Z" fill="currentColor" stroke="none" />
            </Svg>
            <Svg w={18} h={19}>
              <path d="M5 12 L4 4 M7.8 11 V1.5 M11 11 L12 2 M13.5 12 L16.5 5 M5 13 L1.5 9" strokeWidth="2.6" strokeLinecap="round" />
              <path d="M4 9 H14.5 L13 18 H6.5Z" fill="currentColor" stroke="none" />
            </Svg>
            <Svg w={18}><circle cx="8" cy="8" r="6.5" strokeWidth="2" /><path d="M12.5 12.5 L16.5 16.5" strokeWidth="2.6" /></Svg>
            <Svg w={16}><rect x="3" y="3" width="10" height="9" fill="currentColor" stroke="none" /><path d="M.5 5 V.5 H5 M11 .5 H15.5 V5 M15.5 11 V15.5 H11 M5 15.5 H.5 V11" /></Svg>
            <Svg w={18} h={20}><path d="M9 1 L17 5 V15 L9 19 L1 15 V5Z M4 7 L9 10 L14 7 M9 10 V16 M9 10 L5 13 M9 10 L13 13" strokeWidth="1.2" /></Svg>
          </NavBar>
        </Viewport>
        <CutPanel />
      </Main>
      <Taskbar>
        <Launchers>
          <TaskIcon aria-label="Start"><Svg w={16}><path d="M0 2.5 L7 1.5 V7.5 H0Z M8 1.3 L16 0 V7.5 H8Z M0 8.5 H7 V14.5 L0 13.5Z M8 8.5 H16 V16 L8 14.7Z" fill="#fff" stroke="none" /></Svg></TaskIcon>
          <TaskIcon aria-label="Search"><Svg w={18} h={20}><circle cx="11.5" cy="6.5" r="5" strokeWidth="1.4" /><path d="M8 10.5 L1 18" strokeWidth="1.4" /></Svg></TaskIcon>
          <TaskIcon aria-label="Task view"><Svg w={16} h={18}><path d="M.7 1 V3.5 H10.3 V1 M.7 17 V14.5 H10.3 V17 M.7 6 H10.3 V12 H.7Z M14.5 0 V3 M14.5 9 V18" /><rect x="13" y="4" width="3" height="3.5" fill="#fff" stroke="none" /></Svg></TaskIcon>
          <TaskIcon aria-label="Chrome">
            <Svg w={22}>
              <g stroke="none">
                <circle cx="11" cy="11" r="11" fill="#e8c13d" />
                <path d="M11 11 L1.5 5.5 A11 11 0 0 1 20.5 5.5Z" fill="#d8493c" />
                <path d="M11 11 L1.5 5.5 A11 11 0 0 0 10 22 L15 13Z" fill="#2f9e59" />
                <path d="M11 5.5 H20.5 A11 11 0 0 1 10 22 L15.8 13.5Z" fill="#f3cb45" />
                <circle cx="11" cy="11" r="5" fill="#fff" /><circle cx="11" cy="11" r="4" fill="#4485ee" />
              </g>
            </Svg>
          </TaskIcon>
        </Launchers>
        <Task $mr={9}><Svg w={21} h={26}><path d="M3 1 H13 V20 H16 V24 H6 L3 25Z" fill="#f2cd6f" stroke="none" /><path d="M3 1 L7 3 V25 L3 25Z" fill="#fbe6a2" stroke="none" /></Svg>Hand of Adam, Mu...</Task>
        <Task $mr={4}><LogoMark size={22} />Slicer for Fusion 36...</Task>
        <Task $active><LogoMark size={22} />Slicer for Fusion 36...</Task>
        <Tray>
          <TrayButton $w={44} aria-label="People"><Svg w={16}><circle cx="11" cy="3.5" r="2.7" /><circle cx="5" cy="7.5" r="2.5" /><path d="M1 15 Q1 10.5 5 10.5 Q8 10.5 8.5 15 M8 9 Q9 6.5 11 6.5 Q15 6.5 15 11" /></Svg></TrayButton>
          <TrayButton $w={26} aria-label="Show hidden icons"><Svg w={12} h={7}><path d="M1 6 L6 1 L11 6" strokeWidth="1.4" /></Svg></TrayButton>
          <TrayButton aria-label="Network"><Svg w={16} h={14}><path d="M4 2.5 H15.5 V10 H4.5 V4 M8 13 H13 M10.5 10 V13 M.5 .5 H4.5 V4 H.5Z M2.5 4 V13 H6" /></Svg></TrayButton>
          <TrayButton aria-label="Volume"><Svg w={16} h={14}><path d="M.5 5 H3 L7 1.5 V12.5 L3 9 H.5Z M9 4.5 Q11 7 9 9.5 M11 3 Q14 7 11 11" /><path d="M13 1 Q17 7 13 13" opacity="0.5" /></Svg></TrayButton>
          <TrayButton $w={26} aria-label="Dropbox"><Svg w={16} h={14}><path d="M4 0 L8 2.5 L4 5 L0 2.5Z M12 0 L16 2.5 L12 5 L8 2.5Z M4 5 L8 7.5 L4 10 L0 7.5Z M12 5 L16 7.5 L12 10 L8 7.5Z M4.5 10.7 L8 8.5 L11.5 10.7 L8 13.5Z" fill="#fff" stroke="none" /></Svg></TrayButton>
          <TrayButton $w={40}>DEU</TrayButton>
          <Clock>15:50<br />08.06.2019</Clock>
          <TrayButton $w={56} aria-label="Notifications"><Svg w={16}><path d="M0 0 H16 V13 H11 L8 16 V13 H0Z" fill="#fff" stroke="none" /><path d="M3 3.5 H13 M3 6.5 H13 M3 9.5 H9" stroke="#060a11" /></Svg></TrayButton>
          <ShowDesktop />
        </Tray>
      </Taskbar>
    </Window>
  );
}
